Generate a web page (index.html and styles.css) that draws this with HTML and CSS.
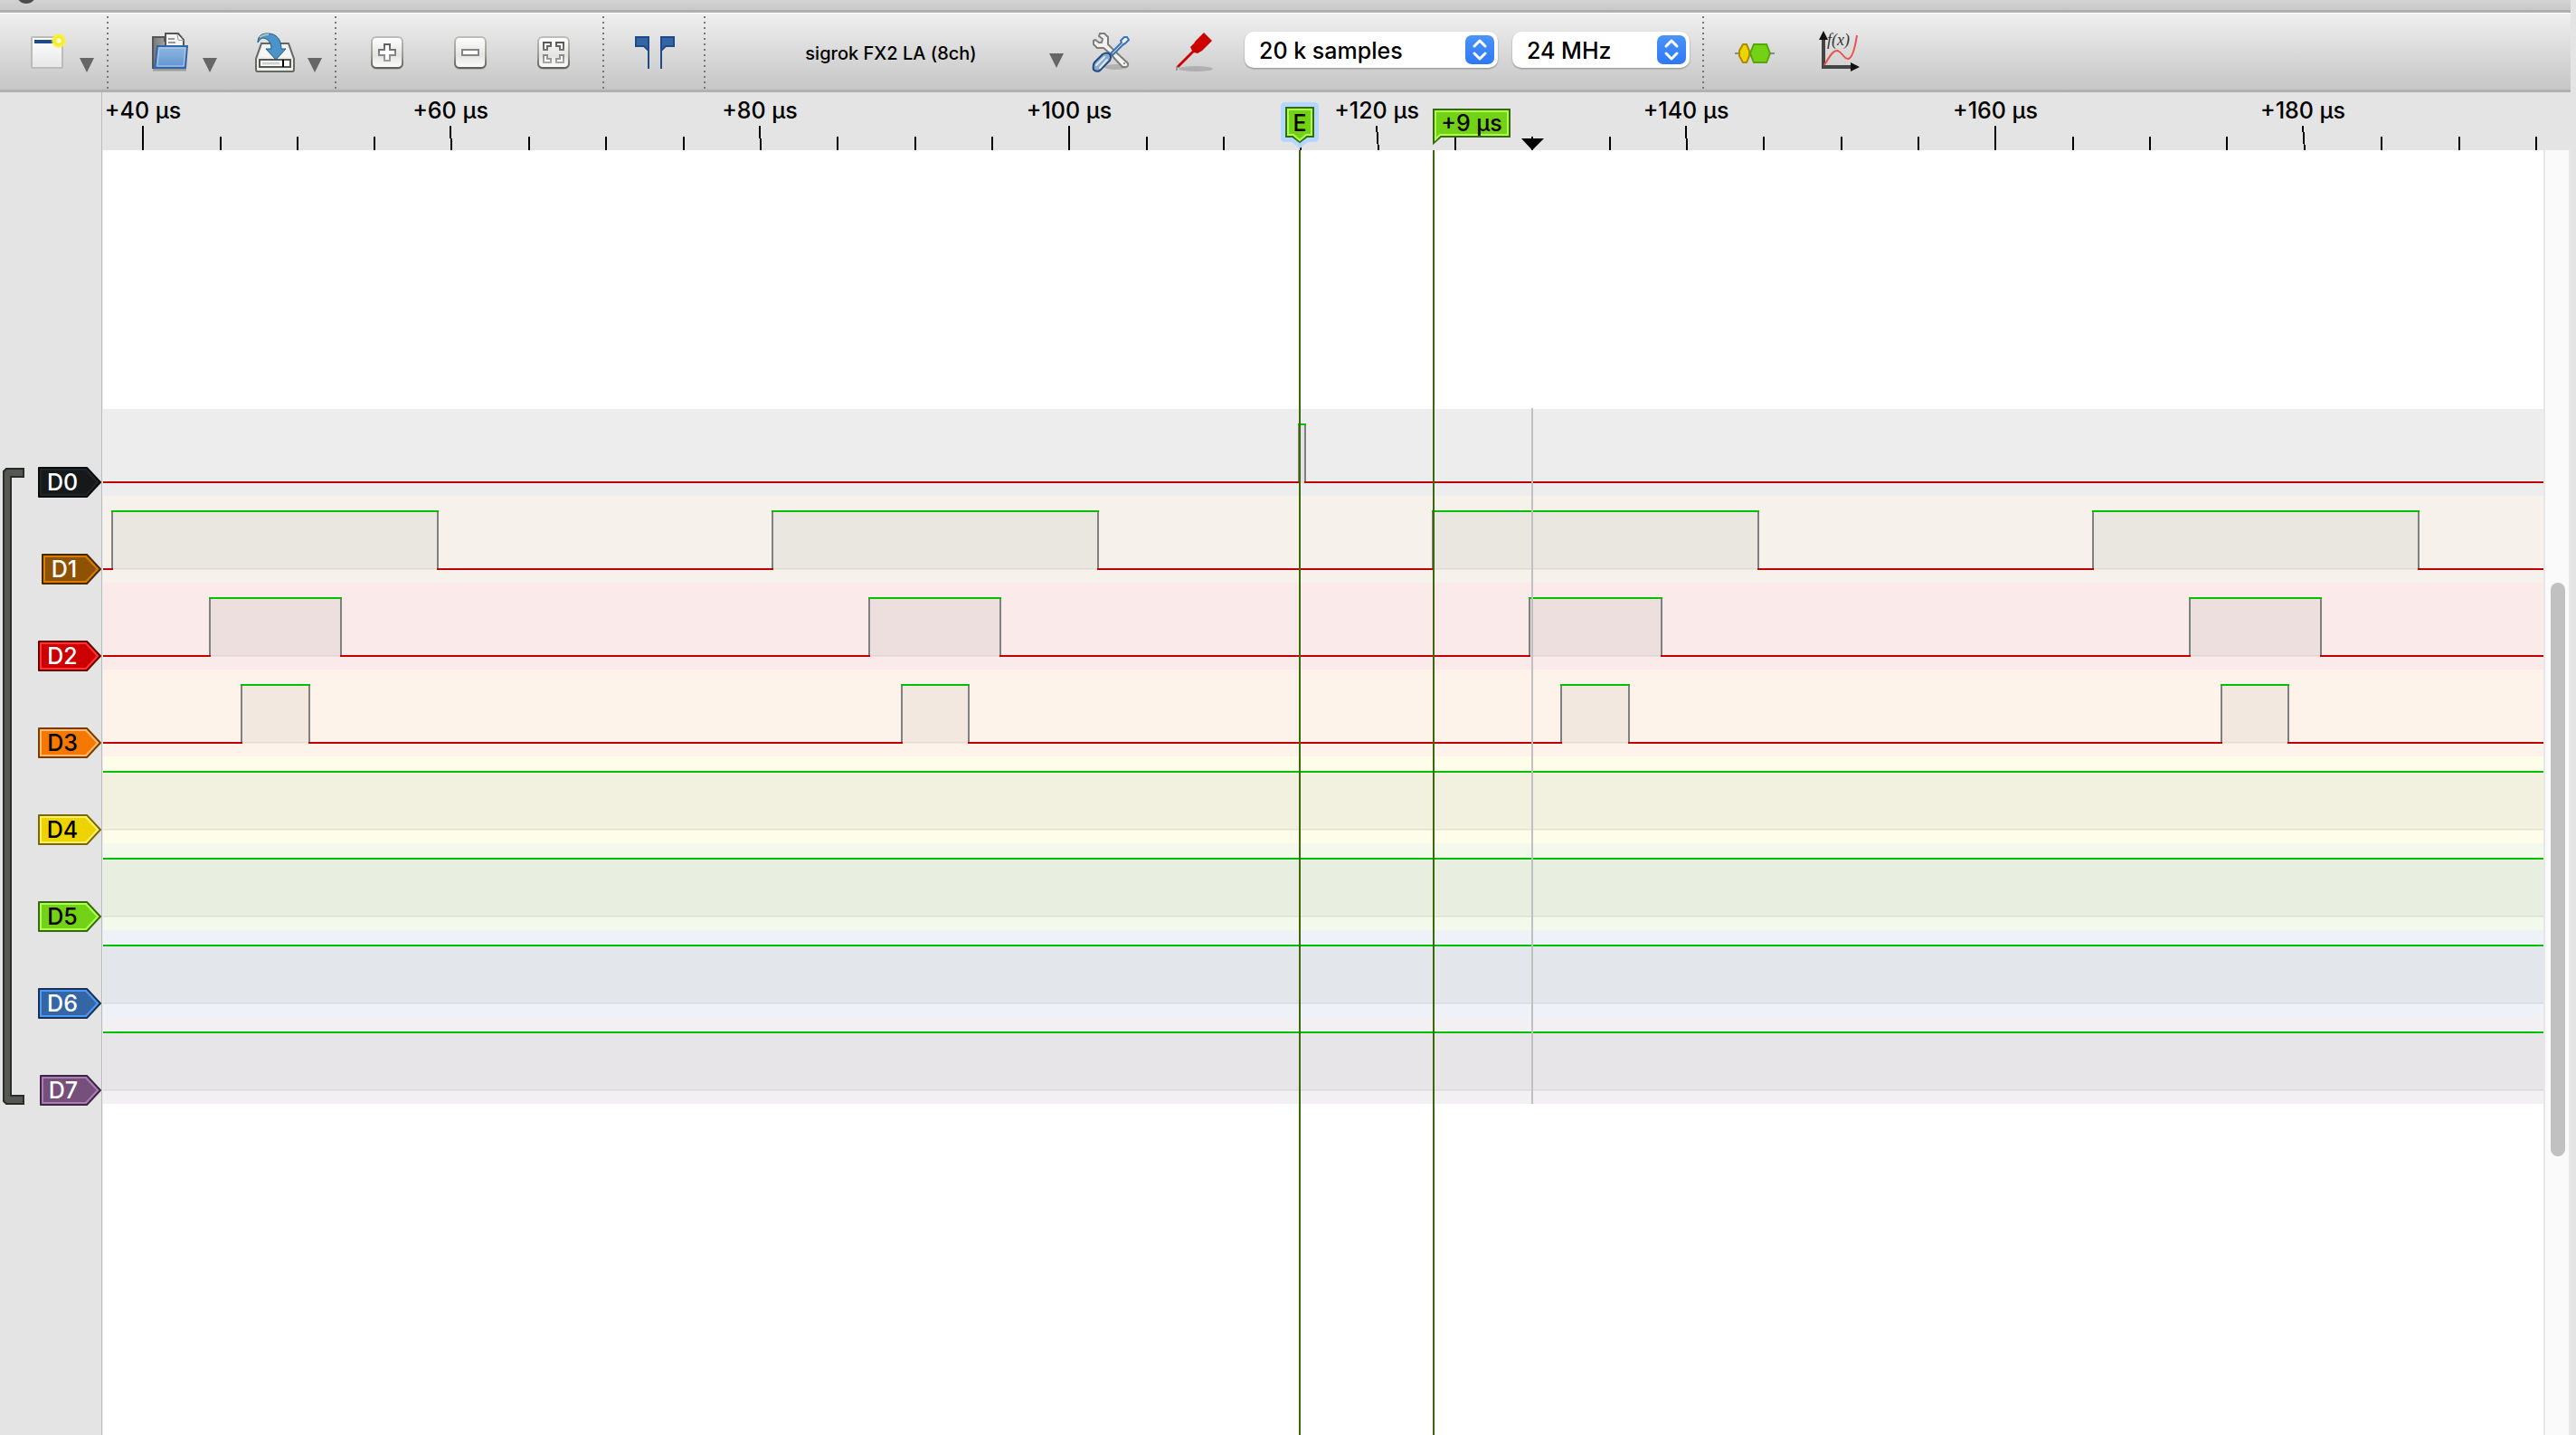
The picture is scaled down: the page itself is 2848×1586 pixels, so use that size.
FILE: index.html
```html
<!DOCTYPE html>
<html lang="en">
<head>
<meta charset="utf-8">
<title>Logic analyzer</title>
<link rel="stylesheet" href="styles.css">
</head>
<body>
<div class="titlebar"><span class="light light-close"></span><span class="light"></span></div>

<div class="toolbar" role="toolbar" aria-label="Capture">
  <button class="menu-button first" aria-label="New session">
    <svg class="icon" viewBox="0 0 44 44">
      <defs>
        <linearGradient id="paper" x1="0" y1="0" x2="0" y2="1"><stop offset="0" stop-color="#fff"/><stop offset="1" stop-color="#e6e6e6"/></linearGradient>
        <radialGradient id="spark"><stop offset="0" stop-color="#fff"/><stop offset=".25" stop-color="#fffbc0"/><stop offset=".4" stop-color="#f6ec20"/><stop offset=".7" stop-color="#f8f040"/><stop offset="1" stop-color="#f8f060" stop-opacity="0"/></radialGradient>
      </defs>
      <rect x="5" y="5" width="34" height="34" rx="1" fill="url(#paper)" stroke="#babdb6" stroke-width="2"/>
      <path d="M8 8H32V12H8Z" fill="#204a87"/>
      <circle cx="35" cy="9" r="9" fill="url(#spark)"/>
    </svg>
    <svg class="arrow" viewBox="0 0 16 16"><path d="M0 0H16L8 16Z"/></svg>
  </button>
  <span class="separator"></span>
  <button class="menu-button" aria-label="Open">
    <svg class="icon" viewBox="0 0 44 44">
      <defs>
        <linearGradient id="back"><stop offset="0" stop-color="#777"/><stop offset="1" stop-color="#ccc"/></linearGradient>
        <linearGradient id="front" x1="0" y1="0" x2="0" y2="1"><stop offset="0" stop-color="#8fb5e0"/><stop offset=".5" stop-color="#7aa6d8"/><stop offset="1" stop-color="#5f93cd"/></linearGradient>
      </defs>
      <path d="M3 41H40" stroke="#000" stroke-opacity=".25" stroke-width="3"/>
      <path d="M3 39V5H16V9H30V39Z" fill="url(#back)" stroke="#555" stroke-width="2"/>
      <path d="M17 16V1H31L37 8V16Z" fill="#f4f4f4" stroke="#555753" stroke-width="2"/>
      <path d="M30 2L31 8L37 9" fill="#fff" stroke="#999"/>
      <path d="M20 7H27M20 11H28" stroke="#999" stroke-width="2"/>
      <path d="M8 15H41L39 39H5Z" fill="url(#front)" stroke="#3465a4" stroke-width="2"/>
      <path d="M10 17H39L37 37H8Z" fill="none" stroke="#b4cfee"/>
    </svg>
    <svg class="arrow" viewBox="0 0 16 16"><path d="M0 0H16L8 16Z"/></svg>
  </button>
  <button class="menu-button" aria-label="Save">
    <svg class="icon" viewBox="0 0 44 44">
      <path d="M7 12H37L43 29V41Q43 43 41 43H3Q1 43 1 41V29Z" fill="#eeeeec" stroke="#666864" stroke-width="2"/>
      <path d="M9 14H35L40 27H4Z" fill="#f6f6f5"/>
      <rect x="5" y="30" width="34" height="8" fill="#fff" stroke="#555753" stroke-width="2"/>
      <path d="M8 34H27" stroke="#d0d0d0" stroke-width="3"/><path d="M31 30V38" stroke="#000" stroke-width="2"/>
      <path d="M3 11C3 3 8 1 14 1C24 1 29 8 29 18H34L23 30L12 18H18C18 10 13 6 8 6Q5 7 3 11Z" fill="#4b93c8" stroke="#1f5a8a"/>
      <path d="M5 5Q10 2 15 2" fill="none" stroke="#a9c9b8" stroke-width="2"/>
    </svg>
    <svg class="arrow" viewBox="0 0 16 16"><path d="M0 0H16L8 16Z"/></svg>
  </button>
  <span class="separator"></span>
  <button class="tool-button" aria-label="Zoom in">
    <svg class="icon" viewBox="0 0 44 44">
      <defs>
        <linearGradient id="key" x1="0" y1="0" x2="0" y2="1"><stop offset="0" stop-color="#fff"/><stop offset=".6" stop-color="#e4e4e2"/><stop offset="1" stop-color="#fdfdfd"/></linearGradient>
        <linearGradient id="rim" x1="0" y1="0" x2="0" y2="1"><stop offset="0" stop-color="#bbbdb6"/><stop offset=".6" stop-color="#999b95"/><stop offset="1" stop-color="#5c5e5a"/></linearGradient>
        <linearGradient id="ink" gradientUnits="userSpaceOnUse" x1="0" y1="10" x2="0" y2="34"><stop offset="0" stop-color="#555"/><stop offset="1" stop-color="#aaa"/></linearGradient>
      </defs>
      <rect x="4" y="6" width="36" height="35" rx="6" fill="#000" fill-opacity=".15"/>
      <rect x="5" y="5" width="34" height="34" rx="5" fill="url(#key)" stroke="url(#rim)" stroke-width="2"/>
      <path d="M19 13H25V19H31V25H25V31H19V25H13V19H19Z" fill="#fff" stroke="url(#ink)" stroke-width="2"/>
    </svg>
  </button>
  <button class="tool-button" aria-label="Zoom out">
    <svg class="icon" viewBox="0 0 44 44">
      <rect x="4" y="6" width="36" height="35" rx="6" fill="#000" fill-opacity=".15"/>
      <rect x="5" y="5" width="34" height="34" rx="5" fill="url(#key)" stroke="url(#rim)" stroke-width="2"/>
      <rect x="13" y="19" width="18" height="6" fill="#fff" stroke="#858585" stroke-width="2"/>
    </svg>
  </button>
  <button class="tool-button" aria-label="Zoom to fit">
    <svg class="icon" viewBox="0 0 44 44">
      <rect x="4" y="6" width="36" height="35" rx="6" fill="#000" fill-opacity=".15"/>
      <rect x="5" y="5" width="34" height="34" rx="5" fill="url(#key)" stroke="url(#rim)" stroke-width="2"/>
      <path d="M11 11H19V15H15V19H11ZM33 11H25V15H29V19H33ZM11 33H19V29H15V25H11ZM33 33H25V29H29V25H33Z" fill="#fff" stroke="url(#ink)" stroke-width="2"/>
    </svg>
  </button>
  <span class="separator"></span>
  <button class="tool-button" aria-label="Show cursors">
    <svg class="icon" viewBox="0 0 44 44">
      <path d="M1 5H15V19H14L10 15H1ZM43 5H29V19H30L34 15H43Z" fill="#3465a4" stroke="#204a87" stroke-width="2"/>
      <path d="M15 4V40M29 4V40" stroke="#204a87" stroke-width="2"/>
    </svg>
  </button>
  <span class="separator"></span>
  <button class="device-button">
    <span class="device-name">sigrok FX2 LA (8ch)</span>
    <svg class="arrow" viewBox="0 0 16 16"><path d="M0 0H16L8 16Z"/></svg>
  </button>
  <button class="tool-button" aria-label="Configure device">
    <svg class="icon" viewBox="0 0 44 44">
      <ellipse cx="28" cy="38" rx="13" ry="3" fill="#000" fill-opacity=".16"/>
      <path d="M10 1H15L19 5V13L24 18L41 34Q42 38 38 38H35L20 22L14 17H7L3 13V9L5 8L9 11H12L13 7L9 4Z" fill="#f2f2f0" stroke="#7c7e7a" stroke-width="2" stroke-linejoin="round"/>
      <circle cx="37" cy="34" r="1" fill="#777"/>
      <path d="M22 23L34 11L33 9L37 5H40L42 8L38 12L36 13L24 25Z" fill="#eef4fb" stroke="#3b73b9" stroke-width="2" stroke-linejoin="round"/>
      <path d="M4 33L13 24Q18 21 21 24Q23 27 21 31L10 42Q6 44 3 41Q2 36 4 33Z" fill="#8daac8" stroke="#204a87" stroke-width="2"/>
      <path d="M6 36L15 27M10 39L18 30" stroke="#dce8f3" stroke-width="2" stroke-linecap="round"/>
    </svg>
  </button>
  <button class="tool-button" aria-label="Configure channels">
    <svg class="icon" viewBox="0 0 44 44">
      <ellipse cx="24" cy="40" rx="19" ry="3" fill="#000" fill-opacity=".16"/>
      <path d="M3 42V37" stroke="#999" stroke-width="2"/>
      <path d="M33 0L42 9L36 15L31 20L26 23L22 22L5 39L3 37L20 20L18 16L22 12L24 9Z" fill="#cc0000"/>
      <path d="M20 15L27 22" stroke="#a40000" stroke-width="1"/>
    </svg>
  </button>
  <label class="combo combo-samples">
    <select aria-label="Sample count"><option>20 k samples</option></select>
    <svg class="stepper" viewBox="0 0 32 32"><path d="M10 12L16 6L22 12M10 20L16 26L22 20"/></svg>
  </label>
  <label class="combo combo-rate">
    <select aria-label="Sample rate"><option>24 MHz</option></select>
    <svg class="stepper" viewBox="0 0 32 32"><path d="M10 12L16 6L22 12M10 20L16 26L22 20"/></svg>
  </label>
  <span class="separator"></span>
  <button class="tool-button" aria-label="Add protocol decoder">
    <svg class="icon" viewBox="0 0 44 44">
      <path d="M0 23H44" stroke="#888a85" stroke-width="2"/>
      <path d="M9 13H13L16 20V26L13 33H9L5 26V20Z" fill="#edd400" stroke="#ad8a00" stroke-width="2"/>
      <path d="M21 13H35L39 23L35 33H21L17 23Z" fill="#73d216" stroke="#55a808" stroke-width="2"/>
    </svg>
  </button>
  <button class="tool-button" aria-label="Add math signal">
    <svg class="icon" viewBox="0 0 44 44">
      <path d="M6 4V38H38" fill="none" stroke="#444" stroke-width="4"/>
      <path d="M1 8L6 -2L11 8ZM36 33L46 38L36 43Z" fill="#111"/>
      <path d="M7 36C14 24 17 20 21 20C26 20 28 29 33 29C38 29 41 16 43 3" fill="none" stroke="#f05050" stroke-width="2"/>
      <text class="fx" x="10" y="14">f(x)</text>
    </svg>
  </button>
</div>

<div class="ruler">
  <div class="gutter-head"></div>
  <svg class="axis">
    <path class="ticks" d="M44 37V64M384 37L385 64M726 37L727 64M1068 37V64M1408 37L1410 64M1750 37L1751 64M2092 37V64M2432 37L2434 64"/>
    <path class="ticks" d="M130 49V64M215 49V64M300 49V64M471 49V64M556 49V64M642 49V64M812 49V64M898 49V64M983 49V64M1154 49V64M1239 49V64M1324 49V64M1495 49V64M1580 49V64M1666 49V64M1836 49V64M1922 49V64M2007 49V64M2178 49V64M2263 49V64M2348 49V64M2519 49V64M2605 49V64M2690 49V64"/>
    <g class="times">
      <text x="44" y="29">+40 µs</text>
      <text x="384" y="29">+60 µs</text>
      <text x="726" y="29">+80 µs</text>
      <text x="1068" y="29">+100 µs</text>
      <text x="1408" y="29">+120 µs</text>
      <text x="1750" y="29">+140 µs</text>
      <text x="2092" y="29">+160 µs</text>
      <text x="2432" y="29">+180 µs</text>
    </g>
    <path class="halo" d="M1307 11H1339Q1344 11 1344 16V50Q1344 55 1339 55H1332L1323 62L1314 55H1307Q1302 55 1302 50V16Q1302 11 1307 11Z"/>
    <path class="flag" d="M1308 17H1338V49H1331L1323 55L1315 49H1308Z"/>
    <path class="flag-shine" d="M1310 19H1336V47H1330L1323 53L1316 47H1310Z"/>
    <text class="flag-text" x="1323" y="43">E</text>
    <path class="flag" d="M1471 19H1555V49H1479L1471 56Z"/>
    <path class="flag-shine" d="M1473 21H1553V47H1478L1473 52Z"/>
    <text class="flag-text" x="1513" y="43">+9 µs</text>
    <path d="M1568 51H1593L1580 64Z"/>
  </svg>
</div>

<main class="view">
  <div class="gutter">
    <svg class="group" viewBox="0 0 26 704"><path d="M24 1V10H10V694H24V703H5L2 700V4L5 1Z"/></svg>
    <div class="tags">
      <button class="tag d0"><svg viewBox="0 0 70 34"><path class="edge" d="M1 1H54L69 17L54 33H1Z"/><path class="shine" d="M3 3H53L66 17L53 31H3Z"/><text x="27" y="26">D0</text></svg></button>
      <button class="tag d1"><svg viewBox="0 0 70 34"><path class="edge" d="M5 1H54L69 17L54 33H5Z"/><path class="shine" d="M7 3H53L66 17L53 31H7Z"/><text x="29" y="26">D1</text></svg></button>
      <button class="tag d2"><svg viewBox="0 0 70 34"><path class="edge" d="M1 1H54L69 17L54 33H1Z"/><path class="shine" d="M3 3H53L66 17L53 31H3Z"/><text x="27" y="26">D2</text></svg></button>
      <button class="tag d3"><svg viewBox="0 0 70 34"><path class="edge" d="M1 1H54L69 17L54 33H1Z"/><path class="shine" d="M3 3H53L66 17L53 31H3Z"/><text x="27" y="26">D3</text></svg></button>
      <button class="tag d4"><svg viewBox="0 0 70 34"><path class="edge" d="M1 1H54L69 17L54 33H1Z"/><path class="shine" d="M3 3H53L66 17L53 31H3Z"/><text x="27" y="26">D4</text></svg></button>
      <button class="tag d5"><svg viewBox="0 0 70 34"><path class="edge" d="M1 1H54L69 17L54 33H1Z"/><path class="shine" d="M3 3H53L66 17L53 31H3Z"/><text x="27" y="26">D5</text></svg></button>
      <button class="tag d6"><svg viewBox="0 0 70 34"><path class="edge" d="M1 1H54L69 17L54 33H1Z"/><path class="shine" d="M3 3H53L66 17L53 31H3Z"/><text x="27" y="26">D6</text></svg></button>
      <button class="tag d7"><svg viewBox="0 0 70 34"><path class="edge" d="M3 1H54L69 17L54 33H3Z"/><path class="shine" d="M5 3H53L66 17L53 31H5Z"/><text x="28" y="26">D7</text></svg></button>
    </div>
  </div>

  <div class="canvas">
    <svg class="trace d0">
      <path class="area" d="M1323 18H1329V82H1323Z"/>
      <path class="step" d="M1322 18V80M1329 18V80"/>
      <path class="low" d="M0 81H1323M1328 81H9000"/>
      <path class="high" d="M1321 17H1330"/>
    </svg>
    <svg class="trace d1">
      <path class="area" d="M11 18H370V82H11ZM741 18H1100V82H741ZM1471 18H1830V82H1471ZM2201 18H2560V82H2201Z"/>
      <path class="base" d="M11 80H369V81H11ZM741 80H1099V81H741ZM1471 80H1829V81H1471ZM2201 80H2559V81H2201Z"/>
      <path class="step" d="M10 18V80M370 18V80M740 18V80M1100 18V80M1470 18V80M1830 18V80M2200 18V80M2560 18V80"/>
      <path class="low" d="M0 81H11M369 81H741M1099 81H1471M1829 81H2201M2559 81H9000"/>
      <path class="high" d="M9 17H371M739 17H1101M1469 17H1831M2199 17H2561"/>
    </svg>
    <svg class="trace d2">
      <path class="area" d="M119 18H263V82H119ZM848 18H992V82H848ZM1578 18H1723V82H1578ZM2308 18H2452V82H2308Z"/>
      <path class="base" d="M119 80H262V81H119ZM848 80H991V81H848ZM1578 80H1722V81H1578ZM2308 80H2451V81H2308Z"/>
      <path class="step" d="M118 18V80M263 18V80M847 18V80M992 18V80M1577 18V80M1723 18V80M2307 18V80M2452 18V80"/>
      <path class="low" d="M0 81H119M262 81H848M991 81H1578M1722 81H2308M2451 81H9000"/>
      <path class="high" d="M117 17H264M846 17H993M1576 17H1724M2306 17H2453"/>
    </svg>
    <svg class="trace d3">
      <path class="area" d="M154 18H228V82H154ZM884 18H957V82H884ZM1613 18H1687V82H1613ZM2343 18H2416V82H2343Z"/>
      <path class="base" d="M154 80H227V81H154ZM884 80H956V81H884ZM1613 80H1686V81H1613ZM2343 80H2415V81H2343Z"/>
      <path class="step" d="M153 18V80M228 18V80M883 18V80M957 18V80M1612 18V80M1687 18V80M2342 18V80M2416 18V80"/>
      <path class="low" d="M0 81H154M227 81H884M956 81H1613M1686 81H2343M2415 81H9000"/>
      <path class="high" d="M152 17H229M882 17H958M1611 17H1688M2341 17H2417"/>
    </svg>
    <svg class="trace d4"><path class="area" d="M0 18H9000V82H0Z"/><path class="base" d="M0 80H9000V81H0Z"/><path class="high" d="M0 17H9000"/></svg>
    <svg class="trace d5"><path class="area" d="M0 18H9000V82H0Z"/><path class="base" d="M0 80H9000V81H0Z"/><path class="high" d="M0 17H9000"/></svg>
    <svg class="trace d6"><path class="area" d="M0 18H9000V82H0Z"/><path class="base" d="M0 80H9000V81H0Z"/><path class="high" d="M0 17H9000"/></svg>
    <svg class="trace d7"><path class="area" d="M0 18H9000V82H0Z"/><path class="base" d="M0 80H9000V81H0Z"/><path class="high" d="M0 17H9000"/></svg>
    <span class="hover-line"></span>
    <span class="cursor cursor-start"></span>
    <span class="cursor cursor-end"></span>
  </div>

  <div class="scrollbar"><div class="thumb"></div></div>
</main>
</body>
</html>
```
FILE: styles.css
```css
* { box-sizing: border-box; }

body {
  margin: 0;
  min-height: 100vh;
  display: flex;
  flex-direction: column;
  padding-right: 6px;
  overflow: hidden;
  background: #e4e4e4;
  color: #000;
  font-family: Inter, "Liberation Sans", sans-serif;
  font-size: 25px;
  font-weight: 500;
}

button, select { margin: 0; padding: 0; border: 0; background: none; color: inherit; font: inherit; }
svg { display: block; flex: none; }

/* Title bar: only its lower edge is inside the window */
.titlebar {
  display: flex;
  gap: 18px;
  height: 14px;
  overflow: hidden;
  border-bottom: 3px solid #b0b0b0;
  background: linear-gradient(#d4d4d4, #c8c8c8);
}
.light { width: 22px; height: 22px; flex: none; margin-top: -18px; border-radius: 50%; background: #4c4c4c; }
.light-close { margin-left: -22px; }

/* Toolbar */
.toolbar {
  display: flex;
  align-items: center;
  height: 88px;
  padding-top: 2px;
  border-top: 1px solid #fff;
  border-bottom: 3px solid #b0b0b0;
  background: linear-gradient(#efefef, #c6c6c6);
}
.icon { width: 44px; height: 44px; overflow: visible; }
.arrow { width: 16px; height: 16px; fill: #666; }
.tool-button { flex: none; padding: 0 24px; }
.menu-button { flex: none; display: flex; align-items: flex-end; gap: 14px; padding: 0 6px 0 36px; }
.menu-button.first { padding-left: 30px; }
.separator {
  flex: none;
  width: 2px;
  height: 80px;
  margin: 0 10px 0 8px;
  background: repeating-linear-gradient(#777 0 2px, transparent 2px 6px);
}
.device-button {
  flex: none;
  display: flex;
  align-items: flex-end;
  width: 392px;
  height: 34px;
  padding: 0 6px 0 20px;
}
.device-name { flex: 1; text-align: center; font-size: 20px; line-height: 32px; }

.combo {
  position: relative;
  flex: none;
  height: 40px;
  margin: 0 0 6px 10px;
  border-radius: 10px;
  background: #fff;
  box-shadow: 0 1px 2px rgba(0, 0, 0, .35);
}
.combo select { appearance: none; width: 100%; height: 40px; padding: 1px 0 0 16px; }
.combo-samples { width: 280px; }
.combo-rate { width: 196px; margin: 0 6px 6px 16px; }
.stepper {
  position: absolute;
  top: 4px;
  right: 4px;
  width: 32px;
  height: 32px;
  border-radius: 7px;
  background: linear-gradient(#4a94f8, #2f78f6);
  fill: none;
  stroke: #fff;
  stroke-width: 3;
  stroke-linecap: round;
  stroke-linejoin: round;
  pointer-events: none;
}
.fx { font: italic 18px "Liberation Serif", serif; fill: #333; }

/* Time ruler */
.ruler { display: flex; height: 64px; }
.gutter-head, .gutter { flex: none; width: 113px; border-right: 1px solid #bcbcbc; }
.axis { flex: 1; height: 64px; margin-left: 1px; overflow: hidden; }
.ticks { fill: none; stroke: #000; stroke-width: 2; shape-rendering: crispEdges; }
.times, .flag-text { text-anchor: middle; }
.halo { fill: #b3d7ff; }
.flag { fill: #73d216; stroke: #396909; stroke-width: 2; }
.flag-shine { fill: none; stroke: #a8ff56; stroke-width: 2; }

/* Trace view */
.view { flex: 1; display: flex; }
.gutter { display: flex; gap: 14px; padding: 350px 0 0 2px; }
.group { width: 26px; height: 704px; margin-top: 1px; fill: #555753; stroke: #2b2b29; stroke-width: 2; }
.tags { display: flex; flex-direction: column; gap: 62px; }
.tag { height: 34px; }
.tag svg { width: 70px; height: 34px; }
.tag text { text-anchor: middle; fill: var(--ink, #fff); }
.edge { fill: var(--fill); stroke: var(--edge); stroke-width: 2; stroke-linejoin: round; }
.shine { fill: none; stroke: var(--shine); stroke-width: 2; }

.d0 { --fill: #16191a; --edge: #0a0c0d; --shine: #202425; --band: #ededed; --area: #e2e2e2; }
.d1 { --fill: #8f5202; --edge: #472901; --shine: #d67b03; --band: #f6f1eb; --area: #eae6e0; }
.d2 { --fill: #cc0000; --edge: #660000; --shine: #ff3232; --band: #fbeaea; --area: #eedfdf; }
.d3 { --fill: #f57900; --edge: #7a3c00; --shine: #ffb66d; --band: #fef3ea; --area: #f2e8df; --ink: #000; }
.d4 { --fill: #edd400; --edge: #766a00; --shine: #fff066; --band: #fefdea; --area: #f2f0df; --ink: #000; }
.d5 { --fill: #73d216; --edge: #396909; --shine: #a8ff56; --band: #f4faeb; --area: #e8eee0; --ink: #000; }
.d6 { --fill: #3465a4; --edge: #1a3252; --shine: #4e97f6; --band: #eef2f8; --area: #e3e7eb; }
.d7 { --fill: #75507b; --edge: #3a283d; --shine: #af78b8; --band: #f3f0f4; --area: #e8e5e8; }

.canvas {
  position: relative;
  flex: 1;
  overflow: hidden;
  padding-top: 286px;
  border-left: 1px solid #eee;
  background: #fff;
}
.trace { width: 100%; height: 96px; background: var(--band); shape-rendering: crispEdges; }
.area { fill: var(--area); }
.base { fill: rgba(0, 0, 0, .05); }
.low, .high, .step { fill: none; stroke-width: 2; }
.low { stroke: #c00000; }
.high { stroke: #00c000; }
.step { stroke: #808080; }

.hover-line { position: absolute; left: 1579px; top: 285px; width: 2px; height: 769px; background: #c0c0c0; }
.cursor { position: absolute; top: 0; bottom: 0; width: 2px; background: #396909; }
.cursor-start { left: 1322px; }
.cursor-end { left: 1470px; }

.scrollbar {
  flex: none;
  width: 30px;
  padding: 478px 6px 0;
  border: solid #e7e7e7;
  border-width: 0 2px;
  background: #fafafa;
}
.thumb { width: 16px; height: 634px; border-radius: 8px; background: #c1c1c1; }
```
